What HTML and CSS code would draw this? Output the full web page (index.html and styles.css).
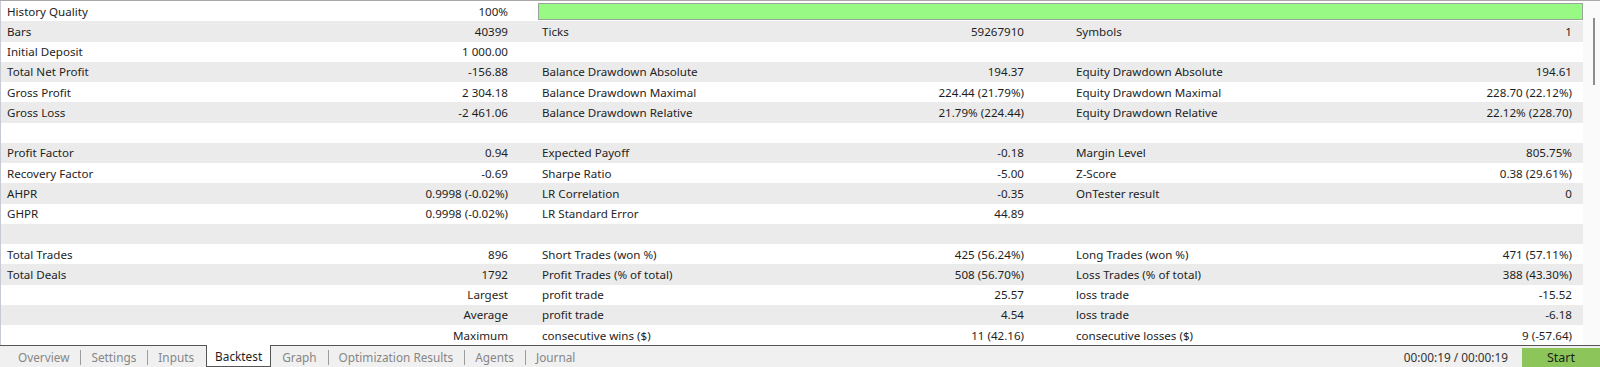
FILE: index.html
```html
<!DOCTYPE html>
<html lang="en">
<head>
    <meta charset="UTF-8">
    <title>Strategy Tester - Backtest</title>
    <link rel="stylesheet" href="styles.css">
</head>
<body>
    <div id="tester">
        <div id="report">
            <div id="rows">
                <div class="row">
                    <div class="cell c1"><span>History Quality</span><span>100%</span></div>
                    <div class="quality"></div>
                </div>
                <div class="row">
                    <div class="cell c1"><span>Bars</span><span>40399</span></div>
                    <div class="cell c2"><span>Ticks</span><span>59267910</span></div>
                    <div class="cell c3"><span>Symbols</span><span>1</span></div>
                </div>
                <div class="row">
                    <div class="cell c1"><span>Initial Deposit</span><span>1 000.00</span></div>
                </div>
                <div class="row">
                    <div class="cell c1"><span>Total Net Profit</span><span>-156.88</span></div>
                    <div class="cell c2"><span>Balance Drawdown Absolute</span><span>194.37</span></div>
                    <div class="cell c3"><span>Equity Drawdown Absolute</span><span>194.61</span></div>
                </div>
                <div class="row">
                    <div class="cell c1"><span>Gross Profit</span><span>2 304.18</span></div>
                    <div class="cell c2"><span>Balance Drawdown Maximal</span><span>224.44 (21.79%)</span></div>
                    <div class="cell c3"><span>Equity Drawdown Maximal</span><span>228.70 (22.12%)</span></div>
                </div>
                <div class="row">
                    <div class="cell c1"><span>Gross Loss</span><span>-2 461.06</span></div>
                    <div class="cell c2"><span>Balance Drawdown Relative</span><span>21.79% (224.44)</span></div>
                    <div class="cell c3"><span>Equity Drawdown Relative</span><span>22.12% (228.70)</span></div>
                </div>
                <div class="row"></div>
                <div class="row">
                    <div class="cell c1"><span>Profit Factor</span><span>0.94</span></div>
                    <div class="cell c2"><span>Expected Payoff</span><span>-0.18</span></div>
                    <div class="cell c3"><span>Margin Level</span><span>805.75%</span></div>
                </div>
                <div class="row">
                    <div class="cell c1"><span>Recovery Factor</span><span>-0.69</span></div>
                    <div class="cell c2"><span>Sharpe Ratio</span><span>-5.00</span></div>
                    <div class="cell c3"><span>Z-Score</span><span>0.38 (29.61%)</span></div>
                </div>
                <div class="row">
                    <div class="cell c1"><span>AHPR</span><span>0.9998 (-0.02%)</span></div>
                    <div class="cell c2"><span>LR Correlation</span><span>-0.35</span></div>
                    <div class="cell c3"><span>OnTester result</span><span>0</span></div>
                </div>
                <div class="row">
                    <div class="cell c1"><span>GHPR</span><span>0.9998 (-0.02%)</span></div>
                    <div class="cell c2"><span>LR Standard Error</span><span>44.89</span></div>
                </div>
                <div class="row"></div>
                <div class="row">
                    <div class="cell c1"><span>Total Trades</span><span>896</span></div>
                    <div class="cell c2"><span>Short Trades (won %)</span><span>425 (56.24%)</span></div>
                    <div class="cell c3"><span>Long Trades (won %)</span><span>471 (57.11%)</span></div>
                </div>
                <div class="row">
                    <div class="cell c1"><span>Total Deals</span><span>1792</span></div>
                    <div class="cell c2"><span>Profit Trades (% of total)</span><span>508 (56.70%)</span></div>
                    <div class="cell c3"><span>Loss Trades (% of total)</span><span>388 (43.30%)</span></div>
                </div>
                <div class="row">
                    <div class="cell c1"><span></span><span>Largest</span></div>
                    <div class="cell c2"><span>profit trade</span><span>25.57</span></div>
                    <div class="cell c3"><span>loss trade</span><span>-15.52</span></div>
                </div>
                <div class="row">
                    <div class="cell c1"><span></span><span>Average</span></div>
                    <div class="cell c2"><span>profit trade</span><span>4.54</span></div>
                    <div class="cell c3"><span>loss trade</span><span>-6.18</span></div>
                </div>
                <div class="row">
                    <div class="cell c1"><span></span><span>Maximum</span></div>
                    <div class="cell c2"><span>consecutive wins ($)</span><span>11 (42.16)</span></div>
                    <div class="cell c3"><span>consecutive losses ($)</span><span>9 (-57.64)</span></div>
                </div>
            </div>
            <div id="scrollbar">
                <div class="thumb"></div>
            </div>
        </div>
        <div id="tabs">
            <div class="tab">Overview</div>
            <div class="tab sep">Settings</div>
            <div class="tab sep">Inputs</div>
            <div class="tab active">Backtest</div>
            <div class="tab">Graph</div>
            <div class="tab sep">Optimization Results</div>
            <div class="tab sep">Agents</div>
            <div class="tab sep">Journal</div>
            <div class="timer">00:00:19 / 00:00:19</div>
            <button id="startButton">Start</button>
        </div>
    </div>
</body>
</html>
```

FILE: styles.css
```css
body {
    margin: 0;
    font-family: "Noto Sans", "Open Sans", sans-serif;
    font-size: 11.6px;
    color: #1e1e1e;
    background-color: #fff;
}

#tester {
    width: 1600px;
    height: 367px;
    display: flex;
    flex-direction: column;
    overflow: hidden;
}

#report {
    display: flex;
    border-top: 1px solid #a9a9a9;
}

#rows {
    width: 1582px;
    border-left: 1px solid #c5cad3;
}

.row {
    height: 20.25px;
    display: flex;
    align-items: center;
    background-color: #fff;
}

.row:nth-child(even) {
    background-color: #ebebeb;
}

.cell {
    display: flex;
    justify-content: space-between;
    white-space: nowrap;
}

.c1 {
    width: 501px;
    margin-left: 6px;
}

.c2 {
    width: 482px;
    margin-left: 34px;
}

.c3 {
    width: 496px;
    margin-left: 52px;
}

.quality {
    flex: 1;
    height: 15px;
    margin-left: 30px;
    background-color: #99f985;
    border: 1px solid #9aa59a;
}

#scrollbar {
    flex: 1;
    background-color: #fafafa;
}

.thumb {
    width: 2px;
    height: 67px;
    margin: 17px 0 0 10px;
    background-color: #8c8c8c;
}

#tabs {
    flex: 1;
    display: flex;
    align-items: stretch;
    padding-left: 7px;
    font-size: 11.8px;
    background-color: #f0f0f0;
    border-top: 1px solid #555;
}

.tab {
    position: relative;
    display: flex;
    align-items: center;
    padding: 0 11px;
    color: #868686;
}

.tab.sep::before {
    content: "";
    position: absolute;
    left: 0;
    top: 4px;
    height: 15px;
    border-left: 1px solid #9c9c9c;
}

.tab.active {
    margin: -1px 0 0 1px;
    padding: 0 8px;
    color: #1e1e1e;
    background-color: #fff;
    border: 1px solid #555;
    border-top: none;
}

.timer {
    margin-left: auto;
    margin-right: 14px;
    display: flex;
    align-items: center;
    color: #333;
}

#startButton {
    width: 78px;
    margin-top: 2px;
    border: none;
    padding: 0;
    font-family: inherit;
    font-size: 12.5px;
    color: #1e1e1e;
    background-color: #8cc55a;
}
```
